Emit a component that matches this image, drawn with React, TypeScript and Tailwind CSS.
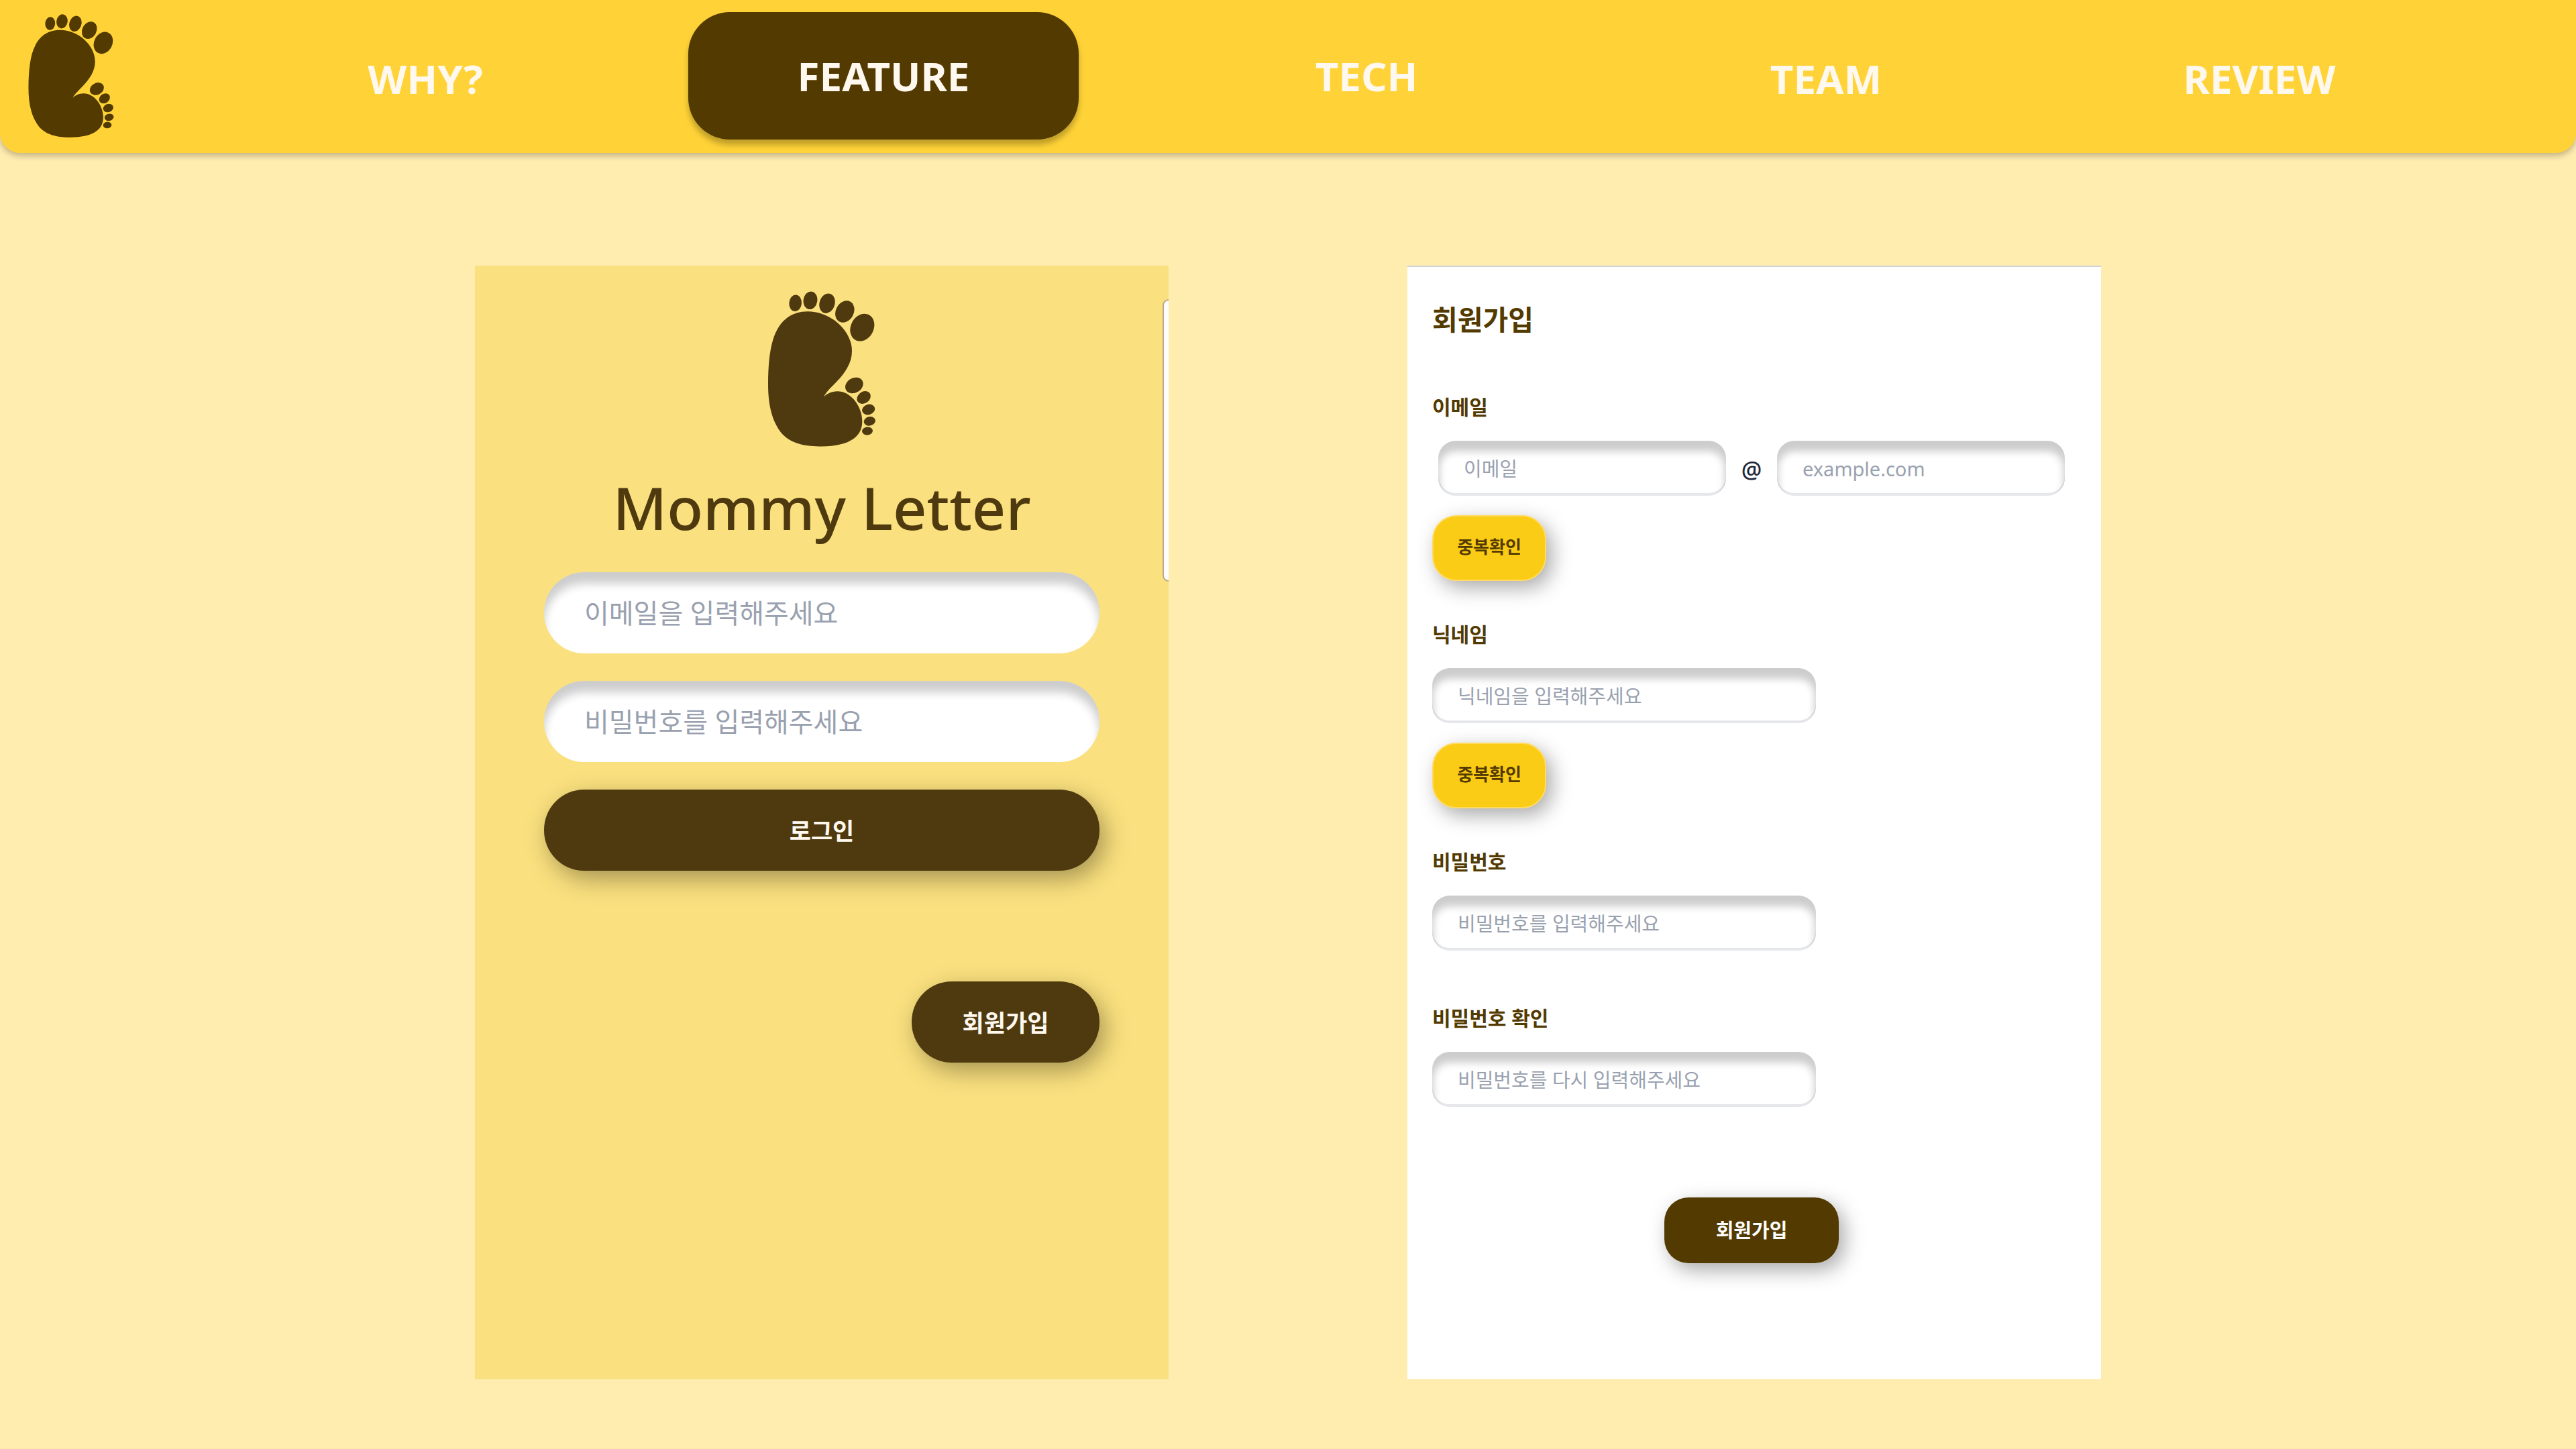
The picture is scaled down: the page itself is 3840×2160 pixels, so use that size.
import type { InputHTMLAttributes, ReactNode } from "react";

function FootLogo({ className }: { className: string }) {
  return (
    <svg viewBox="78 73 480 695" className={className} fill="currentColor" role="img" aria-label="Mommy Letter">
      <path d="M327 545C340 531 362 520 388 520C450 520 499 590 499 655C499 730 430 767 318 767C250 767 185 758 140 710C95 655 78 580 78 490C78 380 90 300 115 252C140 200 185 163 255 163C360 163 453 250 453 340C453 395 420 440 385 477C360 503 338 523 327 545Z" />
      <ellipse cx="200" cy="126" rx="28" ry="37" transform="rotate(5 200 126)" />
      <ellipse cx="267" cy="114" rx="31" ry="40" transform="rotate(10 267 114)" />
      <ellipse cx="342" cy="127" rx="34" ry="45" transform="rotate(18 342 127)" />
      <ellipse cx="421" cy="164" rx="40" ry="51" transform="rotate(28 421 164)" />
      <ellipse cx="499" cy="235" rx="51" ry="64" transform="rotate(28 499 235)" />
      <ellipse cx="463" cy="494" rx="42" ry="33" transform="rotate(-30 463 494)" />
      <ellipse cx="506" cy="548" rx="33" ry="26" transform="rotate(-35 506 548)" />
      <ellipse cx="527" cy="602" rx="29" ry="23" transform="rotate(-18 527 602)" />
      <ellipse cx="532" cy="654" rx="26" ry="20" transform="rotate(-14 532 654)" />
      <ellipse cx="522" cy="698" rx="24" ry="18" transform="rotate(-5 522 698)" />
    </svg>
  );
}

const navLink = "flex items-center justify-center";

function Header() {
  return (
    <header className="rounded-b-[30px] bg-[#ffd337] pt-[18px] pb-5 shadow-[0_4px_10px_rgba(0,0,0,0.25)]">
      <nav className="grid grid-cols-[292fr_684fr_682fr_758fr_612fr_680fr_132fr] text-[60px] leading-[80px] font-bold text-[#fff8ee]">
        <a href="#home" className="flex items-center pl-[42px] text-[#523a00]">
          <FootLogo className="h-[184px] w-[128px]" />
        </a>
        <a href="#why" className={`${navLink} pt-2`}>WHY?</a>
        <a
          href="#feature"
          aria-current="page"
          className="mx-[50px] flex h-[190px] items-center justify-center rounded-[62px] bg-[#523a00] shadow-[0_8px_8px_rgba(0,0,0,0.25)]"
        >
          FEATURE
        </a>
        <a href="#tech" className={navLink}>TECH</a>
        <a href="#team" className={`${navLink} pt-2`}>TEAM</a>
        <a href="#review" className={`${navLink} pt-2`}>REVIEW</a>
      </nav>
    </header>
  );
}

function LoginInput(props: InputHTMLAttributes<HTMLInputElement>) {
  return (
    <input
      {...props}
      className="h-[121px] w-full rounded-[60px] bg-white px-[60px] text-[40px] text-gray-700 shadow-[inset_0_17px_14px_rgba(0,0,0,0.2)] placeholder:text-gray-400"
    />
  );
}

function LoginPanel() {
  return (
    <section className="relative min-h-[1660px] w-full max-w-[1034px] overflow-hidden bg-[#fae07e] pt-[38px] text-[#4f3a10]">
      <FootLogo className="mx-auto h-[232px] w-[160px]" />
      <h1 className="mt-10 text-center text-[88px] leading-[100px] font-medium">Mommy Letter</h1>
      <form className="mx-auto mt-[47px] flex w-full max-w-[828px] flex-col gap-[41px]" onSubmit={(e) => e.preventDefault()}>
        <LoginInput type="email" aria-label="이메일" placeholder="이메일을 입력해주세요" />
        <LoginInput type="password" aria-label="비밀번호" placeholder="비밀번호를 입력해주세요" />
        <button
          type="submit"
          className="h-[121px] rounded-[60px] bg-[#4f3a10] pt-1 text-[35px] font-semibold text-[#fff8ee] shadow-[8px_12px_36px_rgba(0,0,0,0.34)]"
        >
          로그인
        </button>
        <button
          type="button"
          className="mt-[124px] h-[121px] w-[280px] self-end rounded-[60px] bg-[#4f3a10] pt-1 text-[35px] font-semibold text-[#fff8ee] shadow-[8px_12px_36px_rgba(0,0,0,0.34)]"
        >
          회원가입
        </button>
      </form>
      <div className="absolute top-[50px] right-0 h-[421px] w-[9px] rounded-l-[12px] border-2 border-r-0 border-[#bba887] bg-[#fcfcfc]" />
    </section>
  );
}

function SignupInput({ wide, ...props }: InputHTMLAttributes<HTMLInputElement> & { wide?: boolean }) {
  return (
    <input
      {...props}
      className={`h-[82px] rounded-[26px] bg-white px-[38px] text-[29px] text-gray-700 shadow-[inset_0_14px_12px_2px_rgba(0,0,0,0.2),inset_0_-4px_0_#e5e7eb] placeholder:text-gray-400 ${
        wide ? "min-w-0 flex-1" : "w-[572px] max-w-full"
      }`}
    />
  );
}

function CheckButton() {
  return (
    <button
      type="button"
      className="h-[98px] w-[170px] rounded-[36px] border-2 border-[#ffdb62] bg-[#facc15] pb-1 text-[26px] font-semibold text-[#523a00] shadow-[8px_10px_30px_rgba(0,0,0,0.34)]"
    >
      중복확인
    </button>
  );
}

function Field({ id, label, children }: { id: string; label: string; children: ReactNode }) {
  return (
    <div className="flex flex-col items-start">
      <label htmlFor={id} className="mb-[30px] text-[30px] leading-[40px] font-bold">
        {label}
      </label>
      {children}
    </div>
  );
}

function SignupPanel() {
  return (
    <section className="min-h-[1660px] w-full max-w-[1034px] border-t-2 border-[#cfd3da] bg-white pt-12 pr-[45px] pl-[37px] text-[#523a00]">
      <h2 className="text-[41px] leading-[60px] font-bold">회원가입</h2>
      <form className="mt-[81px]" onSubmit={(e) => e.preventDefault()}>
        <div className="flex flex-col gap-[60px]">
          <Field id="email" label="이메일">
            <div className="mb-[29px] flex w-full items-center px-[9px]">
              <SignupInput wide id="email" placeholder="이메일" />
              <span className="w-[76px] pt-1 text-center text-[34px] leading-[40px] font-medium text-gray-800">@</span>
              <SignupInput wide aria-label="이메일 도메인" placeholder="example.com" />
            </div>
            <CheckButton />
          </Field>
          <Field id="nickname" label="닉네임">
            <div className="mb-[29px] flex w-full">
              <SignupInput id="nickname" placeholder="닉네임을 입력해주세요" />
            </div>
            <CheckButton />
          </Field>
          <div className="flex flex-col gap-[81px]">
            <Field id="password" label="비밀번호">
              <SignupInput id="password" type="password" placeholder="비밀번호를 입력해주세요" />
            </Field>
            <Field id="confirm" label="비밀번호 확인">
              <SignupInput id="confirm" type="password" placeholder="비밀번호를 다시 입력해주세요" />
            </Field>
          </div>
        </div>
        <button
          type="submit"
          className="mx-auto mt-[135px] block h-[98px] w-[260px] rounded-[36px] bg-[#523a00] text-[29px] font-bold text-white shadow-[8px_10px_30px_rgba(0,0,0,0.34)]"
        >
          회원가입
        </button>
      </form>
    </section>
  );
}

export default function App() {
  return (
    <div lang="ko" className="min-h-screen bg-[#ffecaf] font-['Noto_Sans','Noto_Sans_CJK_KR',sans-serif]">
      <Header />
      <main className="flex justify-center gap-[356px] pt-[168px] pb-[104px]">
        <LoginPanel />
        <SignupPanel />
      </main>
    </div>
  );
}
